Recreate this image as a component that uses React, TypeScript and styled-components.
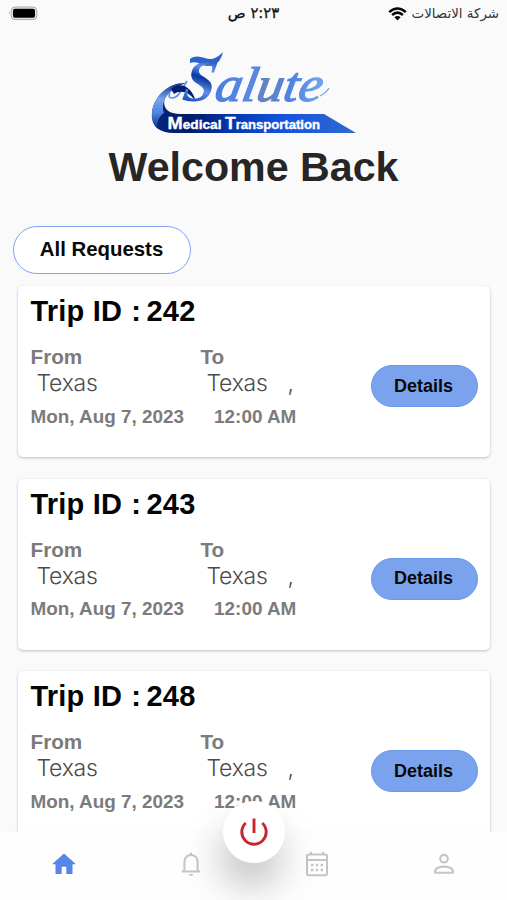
import React from "react";
import styled, { createGlobalStyle } from "styled-components";

const GlobalStyle = createGlobalStyle`
  * { box-sizing: border-box; }
  html, body { margin: 0; padding: 0; background: #fafafa; }
  body { font-family: "Liberation Sans", Arial, sans-serif; overflow: hidden; }
  button { font-family: inherit; padding: 0; margin: 0; cursor: pointer; }
`;

const Screen = styled.div`
  height: 100vh;
  display: flex;
  flex-direction: column;
  background: #fafafa;
  overflow: hidden;
`;

const StatusBar = styled.header`
  height: 28px;
  flex: none;
  display: grid;
  grid-template-columns: 1fr auto 1fr;
  align-items: center;
  padding: 0 8px 0 8px;
  font-family: "DejaVu Sans", sans-serif;
  color: #111;
`;

const Clock = styled.time`
  font-size: 14.8px;
  font-weight: 500;
  line-height: 20px;
  padding-bottom: 2px;
  -webkit-text-stroke: 0.3px #111;
`;

const Carrier = styled.div`
  display: flex;
  justify-content: flex-end;
  align-items: center;
  gap: 5px;
  padding-bottom: 1px;
  font-size: 13.4px;
  line-height: 20px;
  white-space: nowrap;
  color: #333;
`;

const Hero = styled.section`
  flex: none;
  display: flex;
  flex-direction: column;
  align-items: center;
  padding-top: 20px;
`;

const Welcome = styled.h1`
  margin: 5px 0 0;
  font-size: 41.2px;
  line-height: 56px;
  color: #272525;
`;

const FilterRow = styled.div`
  flex: none;
  padding: 31px 13px 0;
`;

const FilterButton = styled.button`
  display: block;
  width: 178px;
  height: 48px;
  border: 1.3px solid #80a4ef;
  border-radius: 24px;
  background: #fff;
  color: #080808;
  font-size: 20.4px;
  font-weight: 700;
  padding: 0 1px 2px 0;
`;

const TripList = styled.main`
  flex: 1;
  min-height: 0;
  overflow: hidden;
  display: flex;
  flex-direction: column;
  gap: 21.5px;
  padding: 12px 17px 0 18px;
`;

const Card = styled.article`
  flex: none;
  height: 171px;
  display: grid;
  grid-template-columns: 1fr 107px;
  padding: 0 12px 0 12.5px;
  background: #fff;
  border-radius: 5px;
  box-shadow: 0 1px 3px rgba(0, 0, 0, 0.24);
`;

const TripTitle = styled.h2`
  margin: 7px 0 0;
  display: flex;
  font-size: 29px;
  line-height: 36px;
  letter-spacing: 0.2px;
  color: #050505;
  white-space: pre;
`;

const Colon = styled.span`
  margin-left: 9px;
`;

const TripNumber = styled.span`
  margin-left: 5.5px;
`;

const Places = styled.div`
  display: grid;
  grid-template-columns: 170px 1fr;
  margin-top: 15px;
`;

const Caption = styled.div`
  font-size: 20.7px;
  line-height: 26px;
  font-weight: 700;
  color: #7b7b7b;
`;

const Place = styled.div`
  padding-left: 6px;
  font-family: Inter, sans-serif;
  font-weight: 300;
  font-size: 23px;
  letter-spacing: -0.25px;
  line-height: 26px;
  color: #4b4b4b;
  white-space: pre;
`;

const Comma = styled.span`
  margin-left: 20px;
`;

const When = styled.div`
  display: flex;
  gap: 30px;
  margin-top: 8.5px;
  font-size: 18.9px;
  line-height: 24px;
  font-weight: 700;
  color: #7b7b7b;
  white-space: nowrap;
`;

const DetailsButton = styled.button`
  margin-top: 79px;
  width: 107px;
  height: 42px;
  border: 1px solid #6b98ed;
  border-radius: 21px;
  background: #7ba2ed;
  color: #080808;
  font-size: 18px;
  font-weight: 700;
  padding: 0 2px 0 0;
`;

const NavBar = styled.nav`
  position: relative;
  flex: none;
  height: 68px;
  display: grid;
  grid-template-columns: 127px 127px 126px 127px;
  background: #fefefe;
  box-shadow: 0 -1px 3px rgba(0, 0, 0, 0.015);
`;

const NavItem = styled.button<{ $active?: boolean }>`
  display: flex;
  justify-content: center;
  align-items: center;
  padding-bottom: 4px;
  border: 0;
  background: none;
  color: ${(p) => (p.$active ? "#5886e7" : "#c4c5ca")};
`;

const PowerButton = styled.button`
  position: absolute;
  left: 223px;
  top: -31px;
  width: 62px;
  height: 62px;
  display: flex;
  justify-content: center;
  align-items: center;
  border: 0;
  border-radius: 50%;
  background: #fff;
  color: #c5282c;
  box-shadow: -3px 25px 38px 0 rgba(0, 0, 0, 0.23);
`;

const Battery = () => (
  <svg width="31" height="16" viewBox="0 0 31 16">
    <path d="M2 5Q.4 7 2 9Z" fill="#aaa" />
    <rect x="3.2" y="1" width="25.6" height="12.6" rx="3.8" fill="#e4e4e4" stroke="#aaa" />
    <rect x="5" y="2.8" width="22" height="9" rx="2" fill="#000" />
  </svg>
);

const Wifi = () => (
  <svg width="19" height="14" viewBox="0 0 19 14" fill="none" stroke="#050505" strokeWidth="2.5">
    <path d="M1.2 5.1Q9.5-2.2 17.8 5.1M4.1 8Q9.5 3.3 14.9 8" />
    <path d="M6.4 10.2Q9.5 7.7 12.6 10.2L9.5 13.4Z" fill="#050505" stroke="none" />
  </svg>
);

const Logo = () => (
  <svg width="210" height="86" viewBox="0 0 210 86" role="img" aria-label="Salute Medical Transportation">
    <defs>
      <linearGradient id="banner" x1="0" x2="1">
        <stop offset="0" stopColor="#07277e" />
        <stop offset=".18" stopColor="#001b67" />
        <stop offset=".4" stopColor="#0637b3" />
        <stop offset=".65" stopColor="#1555df" />
        <stop offset="1" stopColor="#3269ce" />
      </linearGradient>
      <linearGradient id="fold" x1="0" y1="0" x2="0" y2="1">
        <stop offset="0" stopColor="#092c8c" />
        <stop offset=".35" stopColor="#79a5ec" />
        <stop offset=".65" stopColor="#4f85df" />
        <stop offset="1" stopColor="#082b91" />
      </linearGradient>
      <linearGradient id="script" gradientUnits="userSpaceOnUse" x1="63" y1="0" x2="180" y2="0">
        <stop offset="0" stopColor="#477be0" />
        <stop offset=".3" stopColor="#5688e7" />
        <stop offset=".45" stopColor="#6482bd" />
        <stop offset=".65" stopColor="#4e83e4" />
        <stop offset="1" stopColor="#7badf1" />
      </linearGradient>
      <linearGradient id="initial" gradientUnits="userSpaceOnUse" x1="60" y1="8" x2="46" y2="54">
        <stop offset="0" stopColor="#0a2e9c" />
        <stop offset=".3" stopColor="#5f93ea" />
        <stop offset=".5" stopColor="#0b369f" />
        <stop offset=".75" stopColor="#5c90e8" />
        <stop offset="1" stopColor="#1f55c2" />
      </linearGradient>
    </defs>
    <path d="M25 38C12 42 3 54 3 67C3 78 10 85 25 85H207L175 66H31C18 66 13 59 16 50C18 45 21 41 25 38Z" fill="url(#banner)" />
    <path d="M37 35C22 34 6 45 3 64C2 71 4 77 9 81C7 75 10 68 15 65C11 53 20 41 37 35Z" fill="url(#fold)" />
    <path d="M21 45C17 52 26 51 30 46Q34 40 38 33" fill="none" stroke="#5d8fe5" strokeWidth="1.6" />
    <path d="M22 41C31 33 43 38 47 54C40 43 31 42 25 46Z" fill="#031d70" />
    <path d="M41 11C50 4 58 14 66 10C70 8 72 6 74 4C72 12 68 18 60 18C53 18 48 12 41 15Z" fill="#2c63cc" />
    <g transform="translate(9.3 0) skewX(-10)" fontFamily="Liberation Serif, serif" fontStyle="italic">
      <text x="32" y="53" fontSize="59" fontWeight="700" textLength="32" lengthAdjust="spacingAndGlyphs" fill="url(#initial)">S</text>
      <text x="64.5" y="53" fontSize="49" textLength="107" lengthAdjust="spacingAndGlyphs" fill="url(#script)" stroke="url(#script)" strokeWidth="1.2">alute</text>
    </g>
    <path d="M171 48Q177 45 180 40" fill="none" stroke="#72a3ec" strokeWidth="1.3" />
    <g fontFamily="Liberation Sans, sans-serif" fontWeight="700" fill="#fff" stroke="#fff" strokeWidth=".35">
      <text x="18.5" y="81" fontSize="16" textLength="54" lengthAdjust="spacingAndGlyphs">M<tspan fontSize="12">edical</tspan></text>
      <text x="76" y="81" fontSize="16" textLength="95" lengthAdjust="spacingAndGlyphs">T<tspan fontSize="12">ransportation</tspan></text>
    </g>
  </svg>
);

const HomeIcon = () => (
  <svg width="26" height="24" viewBox="0 0 26 24" fill="currentColor">
    <path d="M13 1.5 1 12.2h3.5V22h6.2v-7.2h4.6V22h6.2v-9.8H25Z" />
  </svg>
);

const BellIcon = () => (
  <svg width="20" height="26" viewBox="0 0 20 26" fill="none" stroke="currentColor" strokeWidth="2">
    <path d="M3.4 20.3V11.2C3.4 6.8 6 4.1 10 4.1s6.6 2.7 6.6 7.1v9.1M.8 20.5h18.4M10 3.8V1.4" />
    <path d="M7.8 23h4.4Q11.8 25 10 25T7.8 23Z" fill="currentColor" stroke="none" />
  </svg>
);

const CalendarIcon = () => (
  <svg width="24" height="26" viewBox="0 0 24 26" fill="none" stroke="currentColor" strokeWidth="2">
    <rect x="2" y="3.5" width="20" height="20.8" rx="1.8" />
    <path d="M2 9h20M6 3.5V.8M18 3.5V.8" />
    <path d="M6 14h2.4M10.8 14h2.4M15.6 14H18M6 19h2.4M10.8 19h2.4M15.6 19H18" strokeWidth="2.4" />
  </svg>
);

const PersonIcon = () => (
  <svg width="22" height="22" viewBox="0 0 22 22" fill="none" stroke="currentColor" strokeWidth="2.1">
    <circle cx="11" cy="5.7" r="3.8" />
    <path d="M2.2 19.8v-2c0-2.7 4.7-4.2 8.8-4.2s8.8 1.5 8.8 4.2v2Z" />
  </svg>
);

const PowerIcon = () => (
  <svg width="30" height="30" viewBox="0 0 30 30" fill="none" stroke="currentColor" strokeWidth="2.9">
    <path d="M15 1.5v14.5M6.8 6A12.2 12.2 0 1 0 23.2 6" />
  </svg>
);

const trips = [242, 243, 248];

const TripCard = ({ id }: { id: number }) => (
  <Card>
    <div>
      <TripTitle><span>Trip ID</span><Colon>:</Colon><TripNumber>{id}</TripNumber></TripTitle>
      <Places>
        <Caption>From</Caption>
        <Caption>To</Caption>
        <Place>Texas</Place>
        <Place>Texas<Comma>,</Comma></Place>
      </Places>
      <When><span>Mon, Aug 7, 2023</span><span>12:00 AM</span></When>
    </div>
    <DetailsButton>Details</DetailsButton>
  </Card>
);

export default function App() {
  return (
    <Screen>
      <GlobalStyle />
      <StatusBar>
        <Battery />
        <Clock dir="rtl">٢:٢٣ ص</Clock>
        <Carrier><Wifi /><span dir="rtl">شركة الاتصالات</span></Carrier>
      </StatusBar>
      <Hero>
        <Logo />
        <Welcome>Welcome Back</Welcome>
      </Hero>
      <FilterRow><FilterButton>All Requests</FilterButton></FilterRow>
      <TripList>{trips.map((id) => <TripCard key={id} id={id} />)}</TripList>
      <NavBar>
        <NavItem $active aria-label="Home"><HomeIcon /></NavItem>
        <NavItem aria-label="Notifications"><BellIcon /></NavItem>
        <NavItem aria-label="Calendar"><CalendarIcon /></NavItem>
        <NavItem aria-label="Profile"><PersonIcon /></NavItem>
        <PowerButton aria-label="Power"><PowerIcon /></PowerButton>
      </NavBar>
    </Screen>
  );
}
